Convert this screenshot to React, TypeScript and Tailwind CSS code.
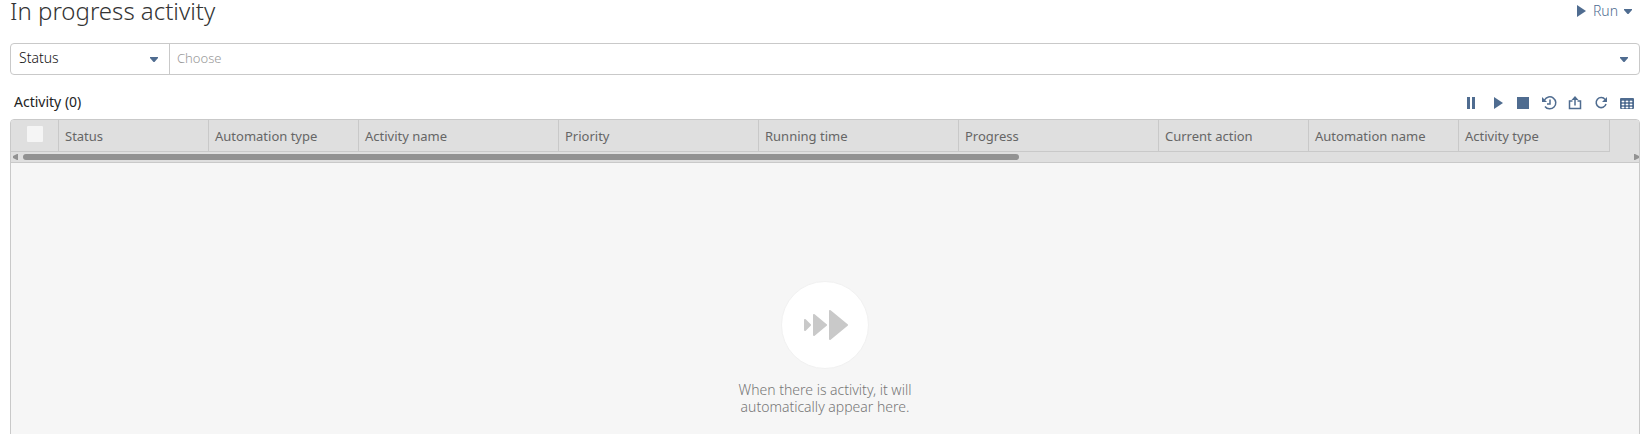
import type { ReactNode } from 'react';

type IconButtonProps = {
  label: string;
  children: ReactNode;
};

const columns = [
  { name: 'Status', width: 'w-[150px]' },
  { name: 'Automation type', width: 'w-[150px]' },
  { name: 'Activity name', width: 'w-[200px]' },
  { name: 'Priority', width: 'w-[200px]' },
  { name: 'Running time', width: 'w-[200px]' },
  { name: 'Progress', width: 'w-[200px]' },
  { name: 'Current action', width: 'w-[150px]' },
  { name: 'Automation name', width: 'w-[150px]' },
  { name: 'Activity type', width: 'w-[151px]' },
];

function Caret() {
  return (
    <svg width="8" height="5" viewBox="0 0 8 5" fill="currentColor" aria-hidden="true">
      <path d="M0 0h8v1L4.500 5h-1L0 1z" />
    </svg>
  );
}

function IconButton({ label, children }: IconButtonProps) {
  return (
    <button type="button" aria-label={label} className="flex size-4 items-center justify-center">
      <svg width="16" height="16" viewBox="0 0 16 16" fill="currentColor" aria-hidden="true">
        {children}
      </svg>
    </button>
  );
}

function Header() {
  return (
    <header className="flex h-[22px] items-center justify-between">
      <h1 className="text-2xl leading-6 font-light text-[#333]">In progress activity</h1>
      <button type="button" className="mr-2 flex items-center gap-1 text-sm font-light text-[#4f6c90]">
        <svg width="16" height="12" viewBox="0 0 16 12" fill="currentColor" aria-hidden="true">
          <path d="M4 0v12l9-6z" />
        </svg>
        Run
        <span className="pl-[2px]">
          <Caret />
        </span>
      </button>
    </header>
  );
}

function FilterBar() {
  return (
    <div className="mt-[21px] flex h-8 rounded-sm border border-[#c9c9c9] bg-white">
      <div className="relative w-[159px] shrink-0 border-r border-[#c9c9c9]">
        <select
          aria-label="Filter by"
          className="h-full w-full appearance-none pb-[2px] pl-2 text-sm font-light text-[#111] outline-none"
        >
          <option>Status</option>
        </select>
        <span className="pointer-events-none absolute top-[13px] right-[11px] text-[#4f6c90]">
          <Caret />
        </span>
      </div>
      <input
        type="text"
        aria-label="Status value"
        placeholder="Choose"
        className="min-w-0 flex-1 px-[7px] text-[13px] font-light outline-none placeholder:text-[#999]"
      />
      <button type="button" aria-label="Open choices" className="px-[11px] text-[#4f6c90]">
        <Caret />
      </button>
    </div>
  );
}

function Toolbar() {
  return (
    <div className="mt-[17px] flex h-[27px] items-start justify-between pr-[5px] pl-1">
      <h2 className="text-sm leading-5 text-[#222]">Activity (0)</h2>
      <div className="mt-[3px] flex gap-[10px] text-[#4f6c90]">
        <IconButton label="Pause">
          <path d="M4 2h3v12H4zM9 2h3v12H9z" />
        </IconButton>
        <IconButton label="Resume">
          <path d="M5 2v12l9-6z" />
        </IconButton>
        <IconButton label="Stop">
          <path d="M2 2h12v12H2z" />
        </IconButton>
        <IconButton label="History">
          <path
            d="M3.5 5A6 6 0 1 1 4 11.500M9 4.500V9H6"
            fill="none"
            stroke="currentColor"
            strokeWidth="1.5"
          />
          <path d="M1 2v5h5z" />
        </IconButton>
        <IconButton label="Export">
          <path
            d="M5.5 6h-3v7.5h11V6h-3M8 10.5V3"
            fill="none"
            stroke="currentColor"
            strokeWidth="1.5"
          />
          <path d="M8 1l3.500 4h-7z" />
        </IconButton>
        <IconButton label="Refresh">
          <path d="M12.2 4.6A5 5 0 1 0 13 9" fill="none" stroke="currentColor" strokeWidth="1.5" />
          <path d="M14 2v5H9z" />
        </IconButton>
        <IconButton label="Columns">
          <rect x="1" y="3" width="14" height="11" rx="1" />
          <path
            d="M3 6h2v1H3zM7 6h2v1H7zM11 6h2v1h-2zM3 9h2v1H3zM7 9h2v1H7zM11 9h2v1h-2zM3 12h2v1H3zM7 12h2v1H7zM11 12h2v1h-2z"
            fill="#fff"
            stroke="#fff"
            strokeWidth="0.6"
          />
        </IconButton>
      </div>
    </div>
  );
}

function ScrollBar() {
  return (
    <div className="flex h-[11px] items-center border-b border-[#c9c9c9] pl-[2px] text-[#929292]">
      <svg width="5" height="6" viewBox="0 0 5 6" fill="currentColor" aria-hidden="true">
        <path d="M5 0v6H4L0 4V2l4-2z" />
      </svg>
      <div className="mx-[5px] flex-1">
        <div className="h-[6px] w-[62%] rounded-full bg-[#929292]" />
      </div>
      <svg width="5" height="6" viewBox="0 0 5 6" fill="currentColor" aria-hidden="true">
        <path d="M0 0v6h1l4-2V2L1 0z" />
      </svg>
    </div>
  );
}

function EmptyState() {
  return (
    <div className="flex flex-col items-center pt-[118px] pb-16">
      <div className="flex size-[88px] items-center justify-center rounded-full border border-[#f1f1f1] bg-white">
        <svg
          width="46"
          height="32"
          viewBox="0 0 46 32"
          fill="#c9c9c9"
          stroke="#c9c9c9"
          strokeWidth="2"
          strokeLinejoin="round"
          aria-hidden="true"
        >
          <path d="M3 11v10l5-5zM12 6v20l12-10zM28 2v28l17-14z" />
        </svg>
      </div>
      <p className="mt-3 w-[190px] text-center text-sm leading-[17px] font-light text-[#777]">
        When there is activity, it will automatically appear here.
      </p>
    </div>
  );
}

function ActivityTable() {
  return (
    <section className="overflow-hidden rounded-t-sm border border-[#c9c9c9] bg-[#f6f6f6]">
      <div className="bg-[#dfdfdf]">
        <div className="overflow-hidden">
          <table className="table-fixed border-separate border-spacing-0">
            <thead>
              <tr className="h-8">
                <th className="w-12 border-r border-b border-[#c9c9c9] p-0">
                  <input
                    type="checkbox"
                    aria-label="Select all"
                    className="mx-auto mb-1 block size-4 appearance-none rounded-[1px] bg-[#f5f5f5]"
                  />
                </th>
                {columns.map((column) => (
                  <th
                    key={column.name}
                    className={`${column.width} border-r border-b border-[#c9c9c9] px-[6px] pt-[2px] pb-0 text-left text-[13px] font-normal whitespace-nowrap text-[#666]`}
                  >
                    {column.name}
                  </th>
                ))}
              </tr>
            </thead>
          </table>
        </div>
        <ScrollBar />
      </div>
      <EmptyState />
    </section>
  );
}

export default function App() {
  return (
    <main className="h-screen overflow-hidden bg-white px-[10px] font-['Noto_Sans',sans-serif]">
      <Header />
      <FilterBar />
      <Toolbar />
      <ActivityTable />
    </main>
  );
}
